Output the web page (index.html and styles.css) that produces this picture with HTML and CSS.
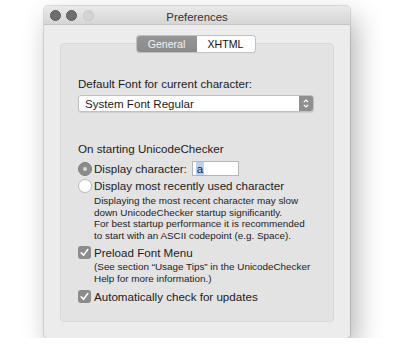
FILE: index.html
```html
<!DOCTYPE html>
<html>
<head>
<meta charset="utf-8">
<link rel="stylesheet" href="styles.css">
</head>
<body>
<div class="window">
  <div class="titlebar">
    <div class="lights">
      <span class="light dark"></span>
      <span class="light dark"></span>
      <span class="light pale"></span>
    </div>
    <div class="title">Preferences</div>
  </div>
  <div class="content">
    <div class="tabs">
      <span class="tab active">General</span>
      <span class="tab">XHTML</span>
    </div>
    <div class="group">
      <div class="label first">Default Font for current character:</div>
      <div class="popup">
        <span class="popup-text">System Font Regular</span>
        <span class="popup-arrows">
          <svg width="8" height="11" viewBox="0 0 8 11"><path d="M1.8 4.2 L4 2 L6.2 4.2 M1.8 6.8 L4 9 L6.2 6.8" fill="none" stroke="#fff" stroke-width="1.2"/></svg>
        </span>
      </div>
      <div class="label section">On starting UnicodeChecker</div>
      <div class="row r1">
        <span class="radio on"></span>
        <span class="text">Display character:</span>
        <span class="field"><span class="sel">a</span></span>
      </div>
      <div class="row r2">
        <span class="radio"></span>
        <span class="text">Display most recently used character</span>
      </div>
      <div class="note n1">Displaying the most recent character may slow<br>down UnicodeChecker startup significantly.<br>For best startup performance it is recommended<br>to start with an ASCII codepoint (e.g. Space).</div>
      <div class="row r3">
        <span class="check">
          <svg width="13" height="13" viewBox="0 0 13 13"><path d="M3.2 6.8 L5.5 9.2 L9.8 3.6" fill="none" stroke="#fff" stroke-width="1.6" stroke-linecap="round" stroke-linejoin="round"/></svg>
        </span>
        <span class="text">Preload Font Menu</span>
      </div>
      <div class="note n2">(See section “Usage Tips” in the UnicodeChecker<br>Help for more information.)</div>
      <div class="row r4">
        <span class="check">
          <svg width="13" height="13" viewBox="0 0 13 13"><path d="M3.2 6.8 L5.5 9.2 L9.8 3.6" fill="none" stroke="#fff" stroke-width="1.6" stroke-linecap="round" stroke-linejoin="round"/></svg>
        </span>
        <span class="text">Automatically check for updates</span>
      </div>
    </div>
  </div>
</div>
</body>
</html>
```
FILE: styles.css
```css
html, body {
  margin: 0;
  padding: 0;
  background: #ffffff;
}
body {
  font-family: "Liberation Sans", Arial, sans-serif;
  color: #1c1c1c;
  padding-top: 6px;
  padding-left: 44px;
}
.window {
  width: 306px;
  height: 332px;
  background: #ececec;
  border-radius: 4px;
  box-shadow: 0 0 0 1px rgba(0,0,0,0.12), 6px 12px 28px rgba(0,0,0,0.3);
  overflow: hidden;
  display: flex;
  flex-direction: column;
}
.titlebar {
  height: 18px;
  background: linear-gradient(#e9e9e9, #d6d6d6);
  border-bottom: 1px solid #c4c4c4;
  position: relative;
  display: flex;
  align-items: center;
  justify-content: center;
  flex: none;
}
.lights {
  position: absolute;
  left: 6px;
  top: 4px;
  display: flex;
  gap: 5px;
}
.light {
  width: 11px;
  height: 11px;
  border-radius: 50%;
  box-sizing: border-box;
}
.light.dark {
  background: #6e6e6e;
  border: 1px solid #5a5a5a;
}
.light.pale {
  background: #d4d4d4;
  border: 1px solid #c6c6c6;
  margin-left: 1px;
}
.title {
  font-size: 11.4px;
  color: #333333;
  line-height: 18px;
  margin-top: 3px;
}
.content {
  padding: 11px 16px 16px 16px;
  flex: 1;
  display: flex;
  flex-direction: column;
}
.tabs {
  align-self: center;
  display: flex;
  height: 16px;
  border-radius: 3px;
  box-shadow: 0 0 0 1px #c2c2c2, 0 1px 1px rgba(0,0,0,0.1);
  position: relative;
  z-index: 2;
  overflow: hidden;
  margin-left: -3px;
}
.tab {
  font-size: 10.6px;
  line-height: 16px;
  text-align: center;
  background: #fdfdfd;
  color: #111111;
}
.tab.active {
  width: 60px;
  background: linear-gradient(#969696, #8a8a8a);
  color: #f2f2f2;
}
.tab:not(.active) {
  width: 58px;
}
.group {
  margin-top: -9px;
  flex: 1;
  background: #e3e3e3;
  border: 1px solid #d9d9d9;
  border-radius: 4px;
  padding: 0 0 0 17px;
  display: flex;
  flex-direction: column;
  align-items: flex-start;
}
.label {
  font-size: 11.6px;
  line-height: 16px;
}
.label.first {
  margin-top: 32px;
}
.popup {
  margin-top: 3px;
  width: 236px;
  height: 17px;
  box-sizing: border-box;
  background: #ffffff;
  border: 1px solid #c0c0c0;
  border-radius: 3px;
  display: flex;
  align-items: center;
  overflow: hidden;
  box-shadow: 0 1px 1px rgba(0,0,0,0.08);
}
.popup-text {
  flex: 1;
  font-size: 11.6px;
  padding-left: 6px;
  line-height: 15px;
}
.popup-arrows {
  width: 14px;
  height: 100%;
  background: #8f8f8f;
  display: flex;
  align-items: center;
  justify-content: center;
}
.label.section {
  margin-top: 29px;
}
.row {
  display: flex;
  align-items: center;
  height: 17px;
  font-size: 11.6px;
}
.row.r1 { margin-top: 3px; }
.row .text { margin-left: 2px; }
.radio {
  width: 14px;
  height: 14px;
  border-radius: 50%;
  box-sizing: border-box;
  background: #ffffff;
  border: 1px solid #b8b8b8;
  position: relative;
  flex: none;
}
.radio.on {
  background: #8b8b8b;
  border-color: #7f7f7f;
}
.radio.on::after {
  content: "";
  position: absolute;
  left: 4px;
  top: 4px;
  width: 4px;
  height: 4px;
  border-radius: 50%;
  background: #d9d9d9;
}
.field {
  margin-left: 5px;
  width: 47px;
  height: 15px;
  box-sizing: border-box;
  background: #fff;
  border: 1px solid #b5b5b5;
  display: flex;
  align-items: center;
  padding-left: 3px;
}
.sel {
  background: #b8d2ee;
  line-height: 13px;
  padding: 0 1px;
}
.note {
  font-size: 9.9px;
  line-height: 11.5px;
  margin-left: 16px;
  white-space: nowrap;
}
.note.n1 { margin-top: 1px; }
.check {
  width: 13px;
  height: 13px;
  border-radius: 3px;
  background: #8c8c8c;
  display: flex;
  flex: none;
  margin-right: 1px;
}
.row.r3 { margin-top: 3px; }
.note.n2 { margin-top: 0; }
.row.r4 { margin-top: 4px; }
```
